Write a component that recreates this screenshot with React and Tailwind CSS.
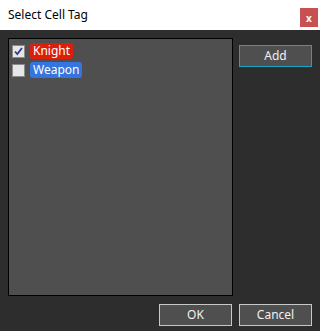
import React from "react";

function Check({ checked }) {
  return (
    <div className="w-[13px] h-[13px] border border-[#8a8a8a] bg-[#e6e6e6] flex items-center justify-center shrink-0">
      {checked && (
        <svg width="11" height="11" viewBox="0 0 11 11">
          <path d="M2 5.5 L4.3 8 L9 2" fill="none" stroke="#2b3d8f" strokeWidth="1.8" />
        </svg>
      )}
    </div>
  );
}

export default function App() {
  const font = { fontFamily: '"Noto Sans", "Open Sans", sans-serif' };
  return (
    <div className="w-[320px] h-[331px] flex flex-col" style={font}>
      <div className="h-[30px] bg-white flex items-start justify-between pl-2 pr-[2px]">
        <div className="text-[12px] text-black leading-none mt-[9px]">Select Cell Tag</div>
        <div className="w-[18px] h-[19px] mt-[8px] bg-[#c75050] flex items-center justify-center text-white text-[10px] font-bold leading-none">x</div>
      </div>
      <div className="flex-1 bg-[#2d2d2d] px-2 pt-2 pb-[5px] flex flex-col">
        <div className="flex">
          <div className="w-[225px] h-[258px] border border-black bg-[#4f4f4f] pl-[3px] pt-[4px] flex flex-col gap-[3px]">
            <div className="flex items-center gap-[5px]">
              <Check checked />
              <span className="h-[16px] px-[3px] rounded-[3px] bg-[#dd1f0a] text-white text-[12px] leading-[16px]">Knight</span>
            </div>
            <div className="flex items-center gap-[5px]">
              <Check />
              <span className="h-[16px] px-[3px] rounded-[3px] bg-[#3674e0] text-white text-[12px] leading-[16px]">Weapon</span>
            </div>
          </div>
          <button className="ml-[6px] mt-[7px] w-[73px] h-[22px] border border-[#1ba3c6] bg-[#4f4f4f] text-[#f0f0f0] text-[12px] leading-none">Add</button>
        </div>
        <div className="flex justify-end gap-[7px] mt-[8px]">
          <button className="w-[73px] h-[22px] border border-[#c8c8c8] bg-[#4f4f4f] text-[#f0f0f0] text-[12px] leading-none">OK</button>
          <button className="w-[73px] h-[22px] border border-[#c8c8c8] bg-[#4f4f4f] text-[#f0f0f0] text-[12px] leading-none">Cancel</button>
        </div>
      </div>
    </div>
  );
}
